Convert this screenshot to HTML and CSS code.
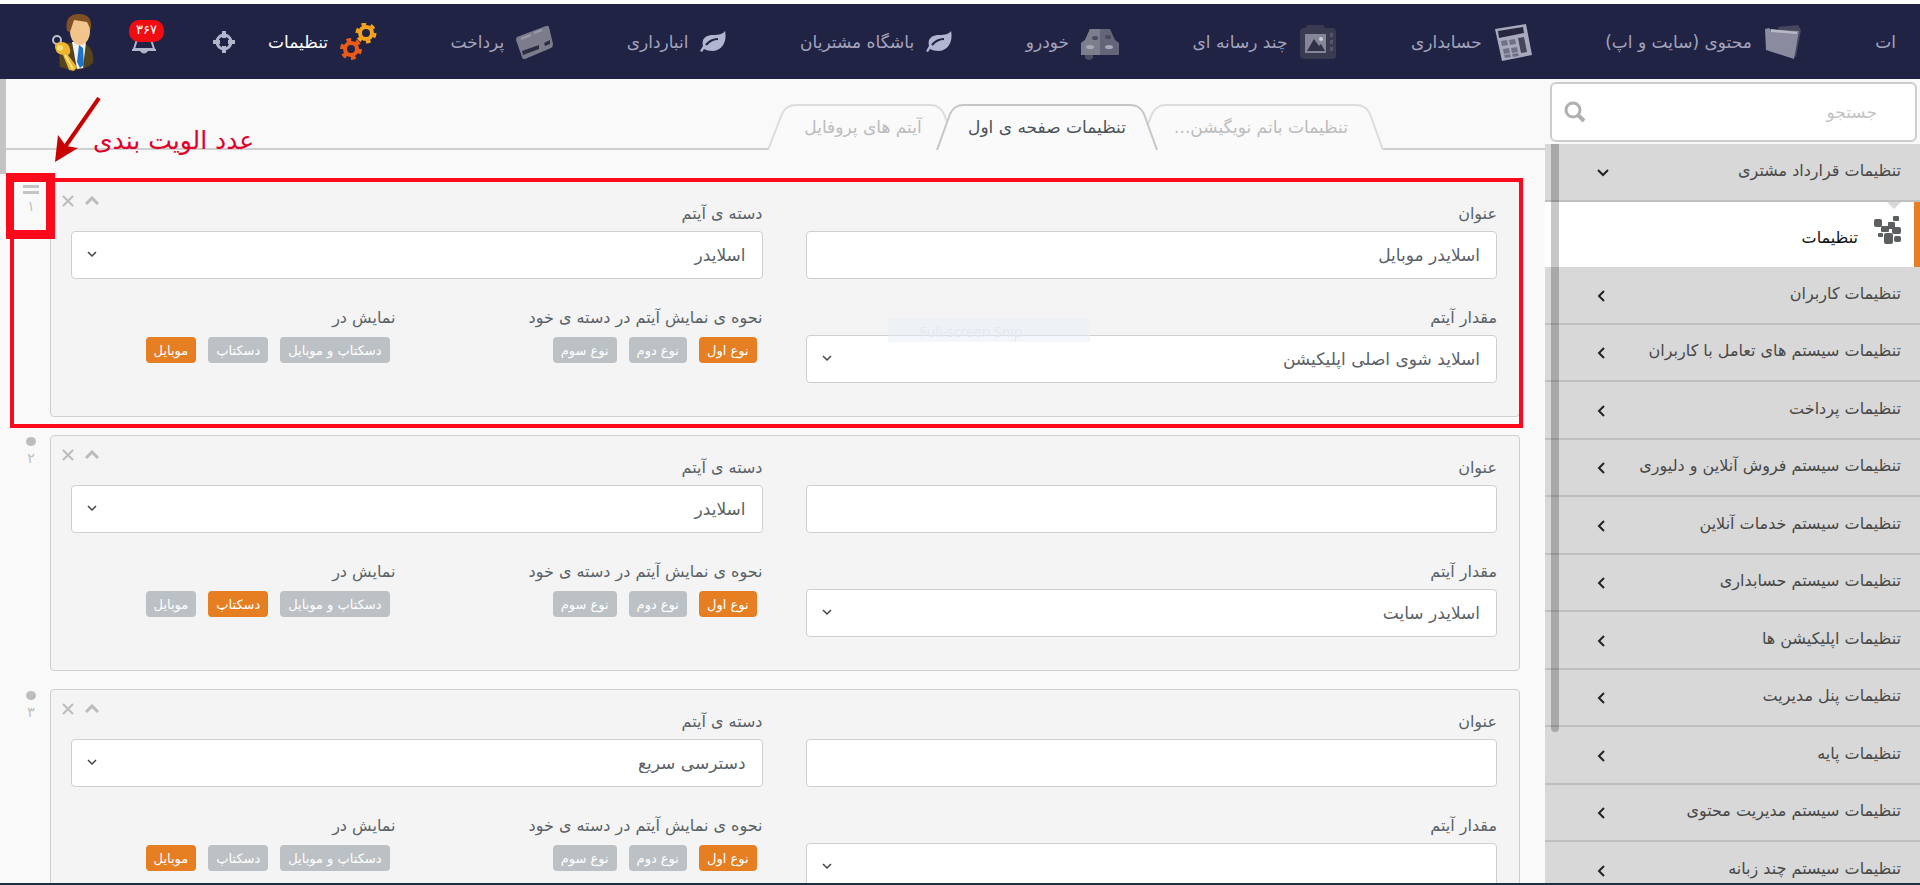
FILE: index.html
```html
<!DOCTYPE html>
<html lang="fa" dir="rtl">
<head>
    <meta charset="UTF-8">
    <title>تنظیمات</title>
    <link rel="stylesheet" href="styles.css">
</head>
<body>
    <header class="topbar">
        <nav class="topnav">
            <a href="#" class="nav-item"><span>ات</span></a>
            <a href="#" class="nav-item">
                <svg width="38" height="38" viewBox="0 0 38 38"><path d="M14 4l20-2 3 5-5 27-10-3z" fill="#46475c"/><path d="M1 6l4-1 2 2 28 1-5 28-28-9z" fill="#8b8b9f"/><path d="M7 6l26 3v2L7 9z" fill="#b9b9c6"/></svg>
                <span>محتوی (سایت و اپ)</span>
            </a>
            <a href="#" class="nav-item">
                <svg width="38" height="38" viewBox="0 0 38 38"><path d="M1 6l31-5 6 31-30 6z" fill="#a9a9be"/><path d="M4 8l25-4 1 6-25 5z" fill="#272840"/><g fill="#707187"><path d="M7 18l6-1 1 5-6 1zM15 17l6-1 1 5-6 1zM9 26l6-1 1 5-6 1zM17 25l6-1 1 5-6 1zM10 32l6-1 1 3-6 1zM18 31l6-1 1 3-6 1z"/></g><path d="M24 15l6-1 3 15-6 1z" fill="#45465c"/></svg>
                <span>حسابداری</span>
            </a>
            <a href="#" class="nav-item">
                <svg width="38" height="38" viewBox="0 0 38 38"><rect x="1" y="5" width="36" height="31" rx="4" fill="#3a3b50"/><path d="M8 2h16l3 4H6z" fill="#3a3b50"/><rect x="6" y="11" width="21" height="19" fill="#858698"/><path d="M8 28l7-12 5 7 2-2 4 7z" fill="#303148"/><circle cx="22" cy="16" r="2" fill="#d0d0d8"/><path d="M31 10h3v4h-3zM31 17h3v4h-3zM31 24h3v4h-3z" fill="#55566a"/></svg>
                <span>چند رسانه ای</span>
            </a>
            <a href="#" class="nav-item">
                <svg width="38" height="38" viewBox="0 0 38 38"><path d="M9 6h20l5 11 4 3v12H0V20l4-3z" fill="#646578"/><path d="M9 6h10v26H0V20l4-3z" fill="#7d7e8c"/><path d="M4 32h8v3q-4 4-8 0z" fill="#4d4e62"/><ellipse cx="14" cy="15" rx="3" ry="2" fill="#4a4b5e"/><ellipse cx="27" cy="14" rx="3" ry="2" fill="#4a4b5e"/><ellipse cx="9" cy="24" rx="4" ry="2" fill="#a8a9b6"/><ellipse cx="28" cy="24" rx="4" ry="2" fill="#a8a9b6"/></svg>
                <span>خودرو</span>
            </a>
            <a href="#" class="nav-item">
                <svg width="26" height="22" viewBox="0 0 26 22"><path d="M25 0c2 8-1 19-12 20-4 0-7-1-9-2l-2 3-2-1 3-5C1 7 7 4 13 4c6 0 10-1 12-4z" fill="#b3b4cf"/><path d="M6 14q5-6 12-6" fill="none" stroke="#212345" stroke-width="2"/></svg>
                <span>باشگاه مشتریان</span>
            </a>
            <a href="#" class="nav-item">
                <svg width="26" height="22" viewBox="0 0 26 22"><path d="M25 0c2 8-1 19-12 20-4 0-7-1-9-2l-2 3-2-1 3-5C1 7 7 4 13 4c6 0 10-1 12-4z" fill="#b3b4cf"/><path d="M6 14q5-6 12-6" fill="none" stroke="#212345" stroke-width="2"/></svg>
                <span>انبارداری</span>
            </a>
            <a href="#" class="nav-item">
                <svg width="37" height="36" viewBox="0 0 37 36"><path d="M1 13L30 2q2-1 3 1l4 17q0 3-2 4L9 35q-3 0-3-2L0 16q0-2 1-3z" fill="#7c7c8b"/><path d="M6 27l17-6v4L7 31zM28 19l6-3v4l-5 2z" fill="#2c2d42"/><path d="M5 15l10-4M18 9l8-3" stroke="#9a9aa8" stroke-width="2"/></svg>
                <span>پرداخت</span>
            </a>
            <a href="#" class="nav-item active">
                <svg width="37" height="38" viewBox="0 0 37 38"><g fill="none"><circle cx="26" cy="10" r="6" stroke="#f5a31d" stroke-width="4"/><circle cx="26" cy="10" r="9" stroke="#f5a31d" stroke-width="3" stroke-dasharray="4.7 4.7"/><circle cx="11" cy="26" r="6" stroke="#ea5b17" stroke-width="4"/><circle cx="11" cy="26" r="9" stroke="#ea5b17" stroke-width="4" stroke-dasharray="4.7 4.7"/></g></svg>
                <span>تنظیمات</span>
            </a>
        </nav>
        <div class="tools">
            <button class="tool" aria-label="موقعیت">
                <svg width="24" height="24" viewBox="0 0 24 24" fill="none" stroke="#b4b5cc"><circle cx="12" cy="12" r="7" stroke-width="3"/><path d="M12 1v7M12 16v7M1 12h7M16 12h7" stroke-width="4"/></svg>
            </button>
            <button class="tool bell" aria-label="اعلان ها">
                <svg width="26" height="24" viewBox="0 0 26 24"><path d="M8 2L3 18h20L18 2" fill="none" stroke="#b4b5cc" stroke-width="2"/><path d="M1 18h24v2H1zM9 20h8q-4 5-8 0z" fill="#b4b5cc"/></svg>
                <span class="badge">۳۶۷</span>
            </button>
            <button class="tool" aria-label="حساب کاربری">
                <svg width="43" height="58" viewBox="0 0 43 58"><path d="M8 54q-3-19 8-24h16q11 6 9 20-12 11-33 4z" fill="#51441f"/><path d="M20 29h14l-3 26-6 1z" fill="#f3f3ee"/><path d="M27 32l4 3 1 17-4 3-3-6z" fill="#1e73c9"/><ellipse cx="28" cy="18" rx="10" ry="14" fill="#f1c58b"/><path d="M15 18Q12 1 27 1q14 0 12 16l-4-8-13-2-4 12z" fill="#805125"/><circle cx="5" cy="27" r="4" fill="none" stroke="#bfc1ca" stroke-width="2"/><path d="M3 31q9-5 14 2 3 7-1 9l9 12-3 4-5-1-6-15q-9-1-8-11z" fill="#efb52f"/><path d="M13 42l8 14" stroke="#fbe484" stroke-width="2"/><circle cx="8" cy="35" r="3" fill="#fbe07a"/></svg>
            </button>
        </div>
    </header>

    <div class="page">
        <aside class="sidebar">
            <div class="search">
                <input type="text" placeholder="جستجو" aria-label="جستجو">
                <svg width="22" height="22" viewBox="0 0 22 22" fill="none" stroke="#b0b0b0"><circle cx="9" cy="9" r="7" stroke-width="3"/><path d="M14 14l6 6" stroke-width="4"/></svg>
            </div>
            <div class="menu-wrap">
                <ul class="menu">
                    <li><a href="#">تنظیمات قرارداد مشتری<svg class="arrow" width="12" height="8" viewBox="0 0 12 8"><path d="M1 1l5 5 5-5"/></svg></a></li>
                    <li class="current"><a href="#">
                        <svg class="cubes" width="27" height="28" viewBox="0 0 27 28" fill="#5c5f60"><rect x="0" y="3" width="8" height="8" rx="2"/><rect x="19" y="0" width="6" height="5" rx="1"/><rect x="7" y="10" width="8" height="6" rx="1"/><rect x="14" y="6" width="7" height="7" rx="1"/><rect x="18" y="11" width="9" height="7" rx="2"/><rect x="4" y="17" width="5" height="4" rx="1"/><rect x="10" y="17" width="9" height="11" rx="2"/><rect x="20" y="20" width="7" height="6" rx="2"/></svg>
                        تنظیمات</a></li>
                    <li><a href="#">تنظیمات کاربران<svg class="arrow" width="8" height="12" viewBox="0 0 8 12"><path d="M7 1L2 6l5 5"/></svg></a></li>
                    <li><a href="#">تنظیمات سیستم های تعامل با کاربران<svg class="arrow" width="8" height="12" viewBox="0 0 8 12"><path d="M7 1L2 6l5 5"/></svg></a></li>
                    <li><a href="#">تنظیمات پرداخت<svg class="arrow" width="8" height="12" viewBox="0 0 8 12"><path d="M7 1L2 6l5 5"/></svg></a></li>
                    <li><a href="#">تنظیمات سیستم فروش آنلاین و دلیوری<svg class="arrow" width="8" height="12" viewBox="0 0 8 12"><path d="M7 1L2 6l5 5"/></svg></a></li>
                    <li><a href="#">تنظیمات سیستم خدمات آنلاین<svg class="arrow" width="8" height="12" viewBox="0 0 8 12"><path d="M7 1L2 6l5 5"/></svg></a></li>
                    <li><a href="#">تنظیمات سیستم حسابداری<svg class="arrow" width="8" height="12" viewBox="0 0 8 12"><path d="M7 1L2 6l5 5"/></svg></a></li>
                    <li><a href="#">تنظیمات اپلیکیشن ها<svg class="arrow" width="8" height="12" viewBox="0 0 8 12"><path d="M7 1L2 6l5 5"/></svg></a></li>
                    <li><a href="#">تنظیمات پنل مدیریت<svg class="arrow" width="8" height="12" viewBox="0 0 8 12"><path d="M7 1L2 6l5 5"/></svg></a></li>
                    <li><a href="#">تنظیمات پایه<svg class="arrow" width="8" height="12" viewBox="0 0 8 12"><path d="M7 1L2 6l5 5"/></svg></a></li>
                    <li><a href="#">تنظیمات سیستم مدیریت محتوی<svg class="arrow" width="8" height="12" viewBox="0 0 8 12"><path d="M7 1L2 6l5 5"/></svg></a></li>
                    <li><a href="#">تنظیمات سیستم چند زبانه<svg class="arrow" width="8" height="12" viewBox="0 0 8 12"><path d="M7 1L2 6l5 5"/></svg></a></li>
                </ul>
                <div class="menu-scroll"></div>
            </div>
        </aside>

        <main class="content">
            <div class="tabs">
                <a href="#" class="tab tab-wide">
                    <svg viewBox="0 0 246 46" preserveAspectRatio="none"><path d="M0 46L14 10Q18 1 28 1H218Q228 1 232 10L245 46"/></svg>
                    <span>تنظیمات باتم نویگیشن...</span>
                </a>
                <a href="#" class="tab active">
                    <svg viewBox="0 0 222 46" preserveAspectRatio="none"><path d="M1 46L14 10Q18 1 28 1H194Q204 1 208 10L221 46"/></svg>
                    <span>تنظیمات صفحه ی اول</span>
                </a>
                <a href="#" class="tab tab-last">
                    <svg viewBox="0 0 190 46" preserveAspectRatio="none"><path d="M0 46L14 10Q18 1 28 1H162Q172 1 176 10L189 46"/></svg>
                    <span>آیتم های پروفایل</span>
                </a>
            </div>

            <div class="items">
                <div class="item marked">
                    <section class="card">
                        <div class="field">
                            <label for="title1">عنوان</label>
                            <input type="text" id="title1" value="اسلایدر موبایل">
                        </div>
                        <div class="field">
                            <label for="cat1">دسته ی آیتم</label>
                            <div class="select"><select id="cat1"><option>اسلایدر</option></select><svg width="10" height="7" viewBox="0 0 10 7"><path d="M1 1l4 4 4-4"/></svg></div>
                        </div>
                        <div class="field">
                            <label for="val1">مقدار آیتم</label>
                            <div class="select"><select id="val1"><option>اسلاید شوی اصلی اپلیکیشن</option></select><svg width="10" height="7" viewBox="0 0 10 7"><path d="M1 1l4 4 4-4"/></svg></div>
                            <div class="snip" dir="ltr">Full-screen Snip</div>
                        </div>
                        <div class="options">
                            <div class="option">
                                <div class="label">نحوه ی نمایش آیتم در دسته ی خود</div>
                                <div class="pills"><button class="pill on">نوع اول</button><button class="pill">نوع دوم</button><button class="pill">نوع سوم</button></div>
                            </div>
                            <div class="option">
                                <div class="label">نمایش در</div>
                                <div class="pills"><button class="pill">دسکتاپ و موبایل</button><button class="pill">دسکتاپ</button><button class="pill on">موبایل</button></div>
                            </div>
                        </div>
                        <div class="card-tools">
                            <button aria-label="بستن"><svg width="14" height="10" viewBox="0 0 14 10"><path d="M1 8l6-6 6 6" stroke-width="3"/></svg></button>
                            <button aria-label="حذف"><svg width="12" height="12" viewBox="0 0 12 12"><path d="M1 1l10 10M11 1L1 11" stroke-width="2"/></svg></button>
                        </div>
                    </section>
                    <div class="order"><span class="grip"></span>۱</div>
                    <div class="order-mark"></div>
                    <svg class="note-arrow" width="48" height="66" viewBox="0 0 48 66"><path d="M45 1L11 50" stroke="#c90000" stroke-width="4"/><path d="M1 65L4 38l8 11 12 2z" fill="#c90000"/></svg>
                    <div class="note">عدد الویت بندی</div>
                </div>

                <div class="item">
                    <section class="card">
                        <div class="field">
                            <label for="title2">عنوان</label>
                            <input type="text" id="title2">
                        </div>
                        <div class="field">
                            <label for="cat2">دسته ی آیتم</label>
                            <div class="select"><select id="cat2"><option>اسلایدر</option></select><svg width="10" height="7" viewBox="0 0 10 7"><path d="M1 1l4 4 4-4"/></svg></div>
                        </div>
                        <div class="field">
                            <label for="val2">مقدار آیتم</label>
                            <div class="select"><select id="val2"><option>اسلایدر سایت</option></select><svg width="10" height="7" viewBox="0 0 10 7"><path d="M1 1l4 4 4-4"/></svg></div>
                        </div>
                        <div class="options">
                            <div class="option">
                                <div class="label">نحوه ی نمایش آیتم در دسته ی خود</div>
                                <div class="pills"><button class="pill on">نوع اول</button><button class="pill">نوع دوم</button><button class="pill">نوع سوم</button></div>
                            </div>
                            <div class="option">
                                <div class="label">نمایش در</div>
                                <div class="pills"><button class="pill">دسکتاپ و موبایل</button><button class="pill on">دسکتاپ</button><button class="pill">موبایل</button></div>
                            </div>
                        </div>
                        <div class="card-tools">
                            <button aria-label="بستن"><svg width="14" height="10" viewBox="0 0 14 10"><path d="M1 8l6-6 6 6" stroke-width="3"/></svg></button>
                            <button aria-label="حذف"><svg width="12" height="12" viewBox="0 0 12 12"><path d="M1 1l10 10M11 1L1 11" stroke-width="2"/></svg></button>
                        </div>
                    </section>
                    <div class="order"><span class="dot"></span>۲</div>
                </div>

                <div class="item">
                    <section class="card">
                        <div class="field">
                            <label for="title3">عنوان</label>
                            <input type="text" id="title3">
                        </div>
                        <div class="field">
                            <label for="cat3">دسته ی آیتم</label>
                            <div class="select"><select id="cat3"><option>دسترسی سریع</option></select><svg width="10" height="7" viewBox="0 0 10 7"><path d="M1 1l4 4 4-4"/></svg></div>
                        </div>
                        <div class="field">
                            <label for="val3">مقدار آیتم</label>
                            <div class="select"><select id="val3"><option></option></select><svg width="10" height="7" viewBox="0 0 10 7"><path d="M1 1l4 4 4-4"/></svg></div>
                        </div>
                        <div class="options">
                            <div class="option">
                                <div class="label">نحوه ی نمایش آیتم در دسته ی خود</div>
                                <div class="pills"><button class="pill on">نوع اول</button><button class="pill">نوع دوم</button><button class="pill">نوع سوم</button></div>
                            </div>
                            <div class="option">
                                <div class="label">نمایش در</div>
                                <div class="pills"><button class="pill">دسکتاپ و موبایل</button><button class="pill">دسکتاپ</button><button class="pill on">موبایل</button></div>
                            </div>
                        </div>
                        <div class="card-tools">
                            <button aria-label="بستن"><svg width="14" height="10" viewBox="0 0 14 10"><path d="M1 8l6-6 6 6" stroke-width="3"/></svg></button>
                            <button aria-label="حذف"><svg width="12" height="12" viewBox="0 0 12 12"><path d="M1 1l10 10M11 1L1 11" stroke-width="2"/></svg></button>
                        </div>
                    </section>
                    <div class="order"><span class="dot"></span>۳</div>
                </div>
            </div>
        </main>
        <div class="page-scroll"></div>
    </div>
</body>
</html>
```

FILE: styles.css
```css
* {
    box-sizing: border-box;
}
body {
    margin: 0;
    height: 100vh;
    display: flex;
    flex-direction: column;
    overflow: hidden;
    border-top: 4px solid #fff;
    border-bottom: 2px solid #1d2f45;
    background: #f9f9fa;
    color: #5a6267;
    font-family: "DejaVu Sans", sans-serif;
    font-size: 17px;
}
a {
    color: inherit;
    text-decoration: none;
}
button, input, select {
    font-family: inherit;
    margin: 0;
}
button {
    border: none;
    background: none;
    padding: 0;
    cursor: pointer;
}
svg {
    display: block;
    flex: none;
}

/* top bar */
.topbar {
    flex: none;
    height: 75px;
    display: flex;
    align-items: center;
    padding: 0 24px 0 52px;
    background: #212345;
}
.topnav {
    flex: 1;
    display: flex;
    align-items: center;
    justify-content: space-between;
}
.nav-item {
    display: flex;
    align-items: center;
    gap: 12px;
    color: #a3a4bb;
    font-size: 17px;
    white-space: nowrap;
}
.nav-item.active {
    color: #fff;
}
.tools {
    display: flex;
    align-items: center;
    margin-right: 32px;
}
.bell {
    position: relative;
    margin: 0 55px 0 36px;
    padding-top: 2px;
}
.badge {
    position: absolute;
    top: -9px;
    left: -2px;
    width: 35px;
    height: 22px;
    border-radius: 10px;
    background: #f00d12;
    color: #fff;
    font-size: 13px;
    line-height: 20px;
}

/* layout */
.page {
    flex: 1;
    min-height: 0;
    display: flex;
}
.page-scroll {
    width: 6px;
    height: 95px;
    background: #c5c3c5;
}

/* sidebar */
.sidebar {
    flex: none;
    width: 375px;
    display: flex;
    flex-direction: column;
}
.search {
    position: relative;
    padding: 3px 3px 2px 5px;
}
.search input {
    width: 100%;
    height: 60px;
    padding: 0 38px 0 60px;
    border: 2px solid #cdcdcd;
    border-radius: 6px;
    background: #fff;
    font-size: 17px;
}
.search input::placeholder {
    color: #c2c2c2;
}
.search svg {
    position: absolute;
    left: 19px;
    top: 22px;
}
.menu-wrap {
    position: relative;
    flex: 1;
    min-height: 0;
    overflow: hidden;
    background: #d8d8d8;
}
.menu {
    margin: 0;
    padding: 0;
    list-style: none;
}
.menu li {
    height: 57px;
    border-bottom: 2px solid #bfbfbf;
    color: #484848;
    font-size: 16px;
}
.menu li:nth-child(odd) {
    height: 58px;
}
.menu a {
    display: flex;
    align-items: center;
    height: 100%;
    padding: 0 19px 4px 52px;
    white-space: nowrap;
}
.arrow {
    margin: 5px auto 0 0;
    fill: none;
    stroke: #222;
    stroke-width: 2;
}
.menu li.current {
    position: relative;
    height: 65px;
    border-bottom: none;
    border-right: 6px solid #e67e22;
    background: #fff;
    color: #111;
}
.current a {
    gap: 16px;
    padding: 6px 13px 0 0;
}
.cubes {
    margin-bottom: 16px;
}
.current::before {
    content: "";
    position: absolute;
    top: 0;
    right: 13px;
    border: 7px solid transparent;
    border-top-color: #d8d8d8;
    border-bottom: none;
}
.menu-scroll {
    position: absolute;
    top: 0;
    left: 6px;
    width: 8px;
    height: 588px;
    border-radius: 0 0 4px 4px;
    background: rgba(0, 0, 0, 0.22);
}

/* tabs */
.content {
    flex: 1;
    min-width: 0;
    overflow: hidden;
}
.tabs {
    display: flex;
    align-items: flex-end;
    height: 71px;
    padding-right: 161px;
    background: linear-gradient(#cfcfcf, #cfcfcf) bottom / 100% 2px no-repeat;
}
.tab {
    position: relative;
    width: 222px;
    height: 46px;
    display: flex;
    align-items: center;
    justify-content: center;
    color: #bcbcbc;
    font-size: 17px;
    white-space: nowrap;
}
.tab svg {
    position: absolute;
    top: 0;
    left: 0;
    width: 100%;
    height: 100%;
    fill: #fafafa;
    stroke: #dcdcdc;
    stroke-width: 2;
}
.tab span {
    position: relative;
}
.tab-wide {
    width: 246px;
}
.tab-last {
    width: 190px;
    margin-right: -22px;
}
.tab.active {
    z-index: 1;
    margin-right: -20px;
    color: #4b5358;
}
.tab.active svg {
    stroke: #c6c6c6;
}

/* item cards */
.items {
    display: flex;
    flex-direction: column;
    gap: 18px;
    padding: 31px 25px 0 0;
}
.item {
    position: relative;
    display: flex;
}
.card {
    position: relative;
    flex: 1;
    height: 236px;
    display: grid;
    grid-template-columns: 1fr 1fr;
    grid-template-rows: 104px 104px;
    column-gap: 43px;
    padding: 20px 22px 0 20px;
    border: 1px solid #cfcfcf;
    border-radius: 4px;
    background: #f4f4f4;
}
.field {
    position: relative;
}
label, .label {
    display: block;
    height: 29px;
    line-height: 24px;
    font-size: 16px;
    white-space: nowrap;
}
.field input, .field select {
    width: 100%;
    height: 48px;
    padding: 0 16px;
    border: 1px solid #cfcfcf;
    border-radius: 4px;
    background: #fff;
    color: #5a6267;
    font-size: 17px;
}
.select {
    position: relative;
}
.select select {
    appearance: none;
}
.select svg {
    position: absolute;
    left: 16px;
    top: 20px;
    fill: none;
    stroke: #444;
    stroke-width: 1.5;
}
.snip {
    position: absolute;
    top: 12px;
    left: 82px;
    width: 202px;
    height: 24px;
    padding-left: 32px;
    line-height: 28px;
    background: rgba(232, 240, 250, 0.5);
    color: #e3e8ed;
    font-family: "Open Sans", sans-serif;
    font-size: 14px;
}
.options {
    display: flex;
}
.option:first-child {
    width: 367px;
}
.pills {
    display: flex;
    gap: 12px;
    padding: 2px 6px 0 0;
}
.pill {
    height: 26px;
    padding: 0 8px;
    border-radius: 4px;
    background: #bbc1c4;
    color: #fff;
    font-size: 13px;
    white-space: nowrap;
}
.pill.on {
    background: #e67e22;
}
.card-tools {
    position: absolute;
    top: 13px;
    left: 11px;
    display: flex;
    align-items: center;
    gap: 11px;
}
.card-tools svg {
    fill: none;
    stroke: #bcbcbc;
}
.order {
    width: 44px;
    padding: 2px 0 0 6px;
    display: flex;
    flex-direction: column;
    align-items: center;
    gap: 4px;
    color: #bdbdbd;
    font-size: 14px;
}
.dot {
    width: 10px;
    height: 9px;
    border-radius: 50%;
    background: #bdbdbd;
}
.grip {
    width: 16px;
    height: 9px;
    margin-top: 2px;
    border: 3px solid #c3c3c3;
    border-width: 3px 0;
}

/* red markup over the first item */
.marked::after {
    content: "";
    position: absolute;
    top: -3px;
    right: -3px;
    bottom: -11px;
    left: 4px;
    border: 4px solid #fb0a1c;
    pointer-events: none;
}
.order-mark {
    position: absolute;
    top: -8px;
    left: -2px;
    width: 51px;
    height: 66px;
    border: 9px solid #fb0a1c;
}
.note-arrow {
    position: absolute;
    top: -84px;
    left: 48px;
}
.note {
    position: absolute;
    top: -58px;
    left: 87px;
    color: #df0029;
    font-size: 25px;
    line-height: 36px;
    white-space: nowrap;
}
```
